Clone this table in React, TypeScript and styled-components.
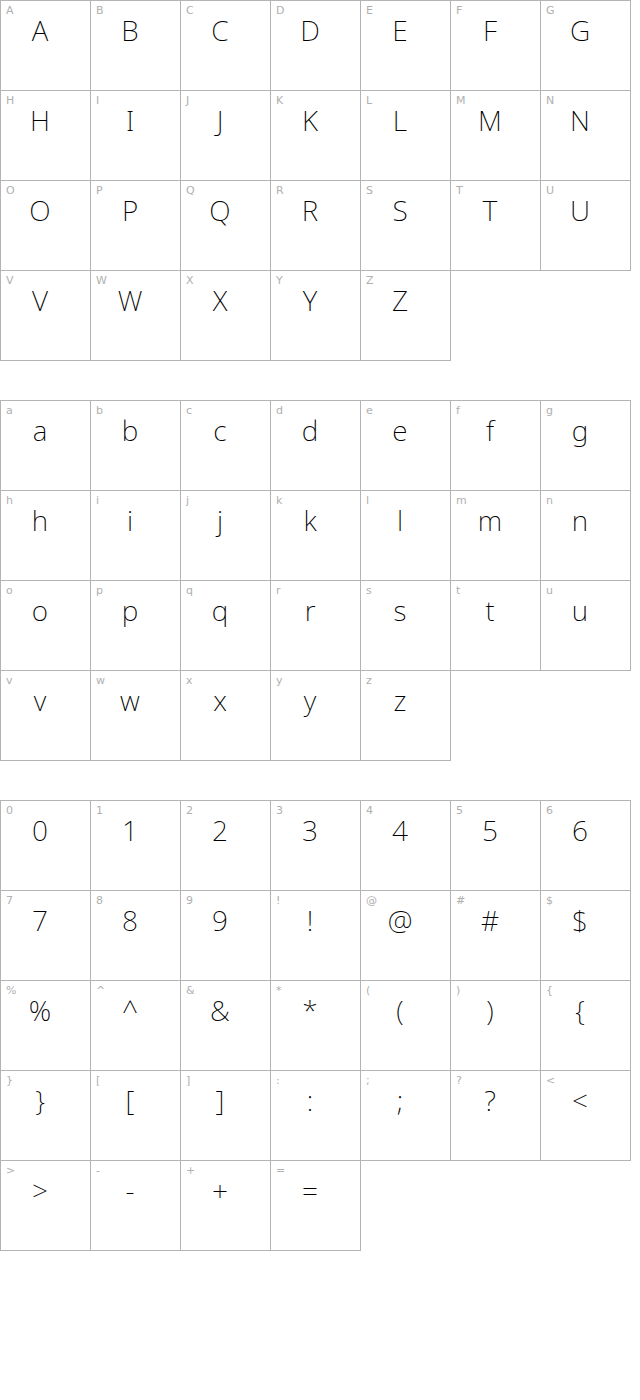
import React from "react";
import styled, { createGlobalStyle } from "styled-components";

const GlobalStyle = createGlobalStyle`
  html, body {
    margin: 0;
    padding: 0;
    background: #ffffff;
  }
`;

const Page = styled.div`
  width: 640px;
`;

const Section = styled.div`
  display: flex;
  flex-wrap: wrap;
  width: 631px;
  margin-bottom: 40px;
`;

const Cell = styled.div`
  box-sizing: border-box;
  width: 91px;
  height: 91px;
  margin: 0 -1px -1px 0;
  border: 1px solid #b4b4b4;
  background: #fff;
`;

const Label = styled.div`
  padding: 3px 0 0 5px;
  height: 14px;
  font-family: "DejaVu Sans", Verdana, sans-serif;
  font-size: 11px;
  line-height: 13px;
  color: #b0b0b0;
`;

const Glyph = styled.div`
  width: 78px;
  text-align: center;
  font-family: "Noto Sans", "Open Sans", sans-serif;
  font-weight: 200;
  font-size: 28px;
  line-height: 24px;
  color: #000;
`;

const upper = "ABCDEFGHIJKLMNOPQRSTUVWXYZ".split("");
const lower = "abcdefghijklmnopqrstuvwxyz".split("");
const symbols = "0123456789!@#$%^&*(){}[]:;?<>-+=".split("");

function CharSection({ chars }: { chars: string[] }) {
  return (
    <Section>
      {chars.map((c) => (
        <Cell key={c}>
          <Label>{c}</Label>
          <Glyph>{c}</Glyph>
        </Cell>
      ))}
    </Section>
  );
}

export default function App() {
  return (
    <Page>
      <GlobalStyle />
      <CharSection chars={upper} />
      <CharSection chars={lower} />
      <CharSection chars={symbols} />
    </Page>
  );
}
